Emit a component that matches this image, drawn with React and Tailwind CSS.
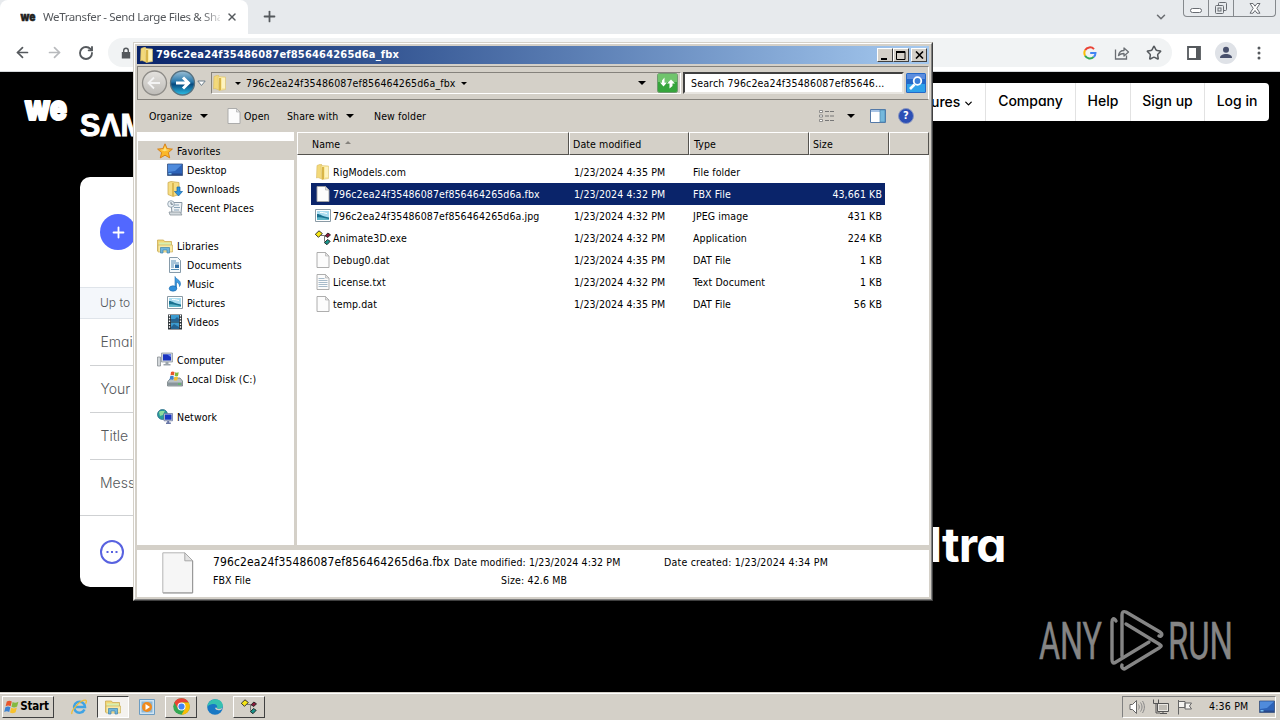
import { ArrowLeft, ArrowRight, RotateCw, X, Plus, ChevronDown, Star } from 'lucide-react';

const UI = "font-['DejaVu_Sans_Condensed','DejaVu_Sans',sans-serif] [font-stretch:condensed]";

function Icon({ size = 16, box = 16, className = '', children }) {
  return (
    <svg width={size} height={size} viewBox={`0 0 ${box} ${box}`} className={`block shrink-0 ${className}`}>
      {children}
    </svg>
  );
}

function FolderIcon() {
  return (
    <Icon>
      <path d="M2 1.500 6 0l1 1v14l-4-1.500-1.500.5z" fill="#f3d97a" stroke="#d8bb62" strokeWidth=".6" />
      <path d="M6 1.500 13.500 2v12.500L7 15.500z" fill="#fbe99c" stroke="#dcc273" strokeWidth=".6" />
      <path d="M7 3h2v12l-2 .5z" fill="#d8b548" />
      <path d="M10 3h3v10h-3z" fill="#fdf3c0" />
    </Icon>
  );
}

function FileIcon({ lines, size = 16 }) {
  return (
    <Icon size={size}>
      <path d="M2 .5h8.500l3.500 3.500v11.500H2z" fill="#fcfcfc" stroke="#a5a5a5" strokeWidth=".9" />
      <path d="M10.500.5v3.500H14z" fill="#e4e4e4" stroke="#a5a5a5" strokeWidth=".6" />
      {lines && <path d="M3.500 4.500h6M3.500 6.500h9M3.500 8.500h9M3.500 10.500h9M3.500 12.500h9" stroke="#9db3c4" strokeWidth=".9" />}
    </Icon>
  );
}

function PictureIcon() {
  return (
    <Icon>
      <path d="M.5 1.500h15v12H.5z" fill="#fff" stroke="#8a9aa5" />
      <path d="M2 3h12v9H2z" fill="#a9dcf0" />
      <path d="M2 6c4 0 5 2.500 12 3.500V12H2z" fill="#17708f" />
      <path d="M2 9.500c4-1 8 1 12 1.500v1H2z" fill="#5fb6c9" />
      <path d="M5 4.500c3-.5 4 .5 7 1" stroke="#fff" fill="none" />
    </Icon>
  );
}

function AppIcon({ size = 16 }) {
  return (
    <Icon size={size}>
      <path d="M6 5.500h3.500v6H11M9.500 6H11" stroke="#777" fill="none" />
      <path d="M4 .8 7.300 3.500 3.500 7.300.3 4.300z" fill="#f5e614" stroke="#222" strokeWidth=".9" />
      <path d="m12.800 3 2.700 1.800-2.700 2.700-2.600-1.700z" fill="#8c1a3c" stroke="#222" strokeWidth=".9" />
      <path d="m12.500 9.500 2.700 1.800-3.200 3.400-2.600-2z" fill="#18958c" stroke="#222" strokeWidth=".9" />
    </Icon>
  );
}

function StarIcon() {
  return (
    <Icon>
      <path d="m8 .8 2.100 4.800 5.300.5-4 3.500 1.300 5.300L8 12.200l-4.700 2.700 1.300-5.300-4-3.500 5.300-.5z" fill="#fbb829" stroke="#d67c12" strokeWidth=".9" />
      <path d="m8 3 1.300 3.400 3.200.3-5 1.500-4-1.500 3.200-.3z" fill="#ffe07a" />
    </Icon>
  );
}

function DesktopIcon() {
  return (
    <Icon>
      <path d="M.5 2h15v11.500H.5z" fill="#2d63b8" stroke="#38527c" strokeWidth=".8" />
      <path d="M1 2.500h14L8 9 1 10z" fill="#4f8bdc" />
      <path d="M1 11.500h14V13H1z" fill="#28488a" />
      <path d="M1.500 11h3v1.500h-3z" fill="#79c0ef" />
    </Icon>
  );
}

function DownloadsIcon() {
  return (
    <Icon>
      <path d="M1 1.500 4 .5l8 1v12l-6 2-5-2z" fill="#f6dd84" stroke="#c9a545" strokeWidth=".7" />
      <path d="M5 2h2v13H5z" fill="#dcb951" />
      <path d="M10 6h3v4.500h2.500l-4 4.500-4-4.500H10z" fill="#2f93dd" stroke="#1666a8" strokeWidth=".7" />
    </Icon>
  );
}

function RecentIcon() {
  return (
    <Icon>
      <path d="M4 2.500h11l-1 11h-9z" fill="#eef2f5" stroke="#8897a4" />
      <path d="M7 5h5M7 7.500h6M7 10h5" stroke="#8aa4b8" />
      <circle cx="4" cy="4" r="3.300" fill="#e9f0f5" stroke="#8596a3" strokeWidth=".8" />
      <path d="M4 2v2.200h2" stroke="#526270" fill="none" strokeWidth=".8" />
      <path d="M2 12h11l2 3H3z" fill="#d4dade" stroke="#808b93" strokeWidth=".7" />
    </Icon>
  );
}

function LibrariesIcon({ size = 16 }) {
  return (
    <Icon size={size}>
      <path d="M.5 2h6l1 1.500h7V13H.5z" fill="#f2d778" stroke="#c5a446" strokeWidth=".7" />
      <path d="M2 4.500h12V8H2z" fill="#d8eeb0" />
      <path d="M1 7h14.500v7H1z" fill="#f9e9a4" stroke="#cdb159" strokeWidth=".7" />
      <path d="M3.500 15V9.500h9V15h-2.500v-3H6v3z" fill="#6fb5dc" stroke="#3c83ac" strokeWidth=".7" />
    </Icon>
  );
}

function DocumentsIcon() {
  return (
    <Icon>
      <path d="M2.500.5h8l3 3v12h-11z" fill="#f6fafc" stroke="#7890a0" strokeWidth=".9" />
      <path d="M4 4h5M4 6h8M4 8h3M4 10h3M4 12.500h8" stroke="#568eb6" />
      <path d="M8 7.500h4V11H8z" fill="#2e6da4" />
    </Icon>
  );
}

function MusicIcon() {
  return (
    <Icon>
      <path d="M8 .5c1 3 5.500 3 5.500 7.500 0 1-.5 2-1 2.500C12.500 7 10 6.500 9.500 6v6.500H8z" fill="#3e9be0" stroke="#1e70b5" strokeWidth=".6" />
      <ellipse cx="6" cy="12.500" rx="3.800" ry="2.700" fill="#2f8fdb" stroke="#1b68aa" strokeWidth=".6" />
    </Icon>
  );
}

function VideosIcon() {
  return (
    <Icon>
      <path d="M1 .5h14v15H1z" fill="#2c3338" />
      <path d="M4 1h8v6.500H4zM4 8.500h8V15H4z" fill="#3b9bd0" />
      <path d="M4 5h4l2-2 2 2v2.500H4zM4 13l3-3 5 3v2H4z" fill="#246391" />
      <path d="M2.500 1v14M13.500 1v14" stroke="#fff" strokeWidth="1.300" strokeDasharray="1.500 1.300" />
    </Icon>
  );
}

function ComputerIcon() {
  return (
    <Icon>
      <path d="M.5 5h3v9h-3z" fill="#d3d7da" stroke="#7e858a" strokeWidth=".7" />
      <path d="M4.500 1h11v9h-11z" fill="#cfd5dc" stroke="#858f98" strokeWidth=".7" />
      <path d="M6 2.300h8v6.200H6z" fill="#1a35c0" />
      <path d="M10 2.300h4v3z" fill="#6e8cf0" />
      <path d="M8.500 10h3v2h2v1.500h-7V12h2z" fill="#9ba4ab" />
    </Icon>
  );
}

function DiskIcon() {
  return (
    <Icon>
      <path d="m2 9 2-2h9l2.500 3v5H.5v-4z" fill="#b9c2c6" stroke="#737d82" strokeWidth=".8" />
      <path d="M1 11.500h14v3H1z" fill="#89959b" />
      <path d="M11 12.500h3v1h-3z" fill="#45d445" />
      <path d="M4 1c1.500-1 2.500-.5 3.500 0L7 4.500c-1.200-.6-2.300-.6-3.500 0z" fill="#e8562a" />
      <path d="M8.200 1.300c1 .5 2 .5 3.500 0L11 5c-1.200.5-2.200.5-3.300 0z" fill="#82b93c" />
      <path d="M3.200 5.300c1.200-.6 2.300-.6 3.500 0L6 9c-1.200-.6-2.200-.6-3.500 0z" fill="#3d83d2" />
      <path d="M7.500 5.700c1 .5 2 .5 3.500 0l-.8 3.500c-1 .5-2.200.5-3.300 0z" fill="#f6c12e" />
    </Icon>
  );
}

function NetworkIcon() {
  return (
    <Icon>
      <circle cx="5.500" cy="5.500" r="5" fill="#2b9c9c" stroke="#1b5f80" strokeWidth=".7" />
      <path d="M2 3c2-2 4 0 6-1.500L6 6 3 7z" fill="#8fdc9c" />
      <path d="M7 4.500h8.500v7.300H7z" fill="#cfd5dc" stroke="#5d6b9a" strokeWidth=".7" />
      <path d="M8 5.500h6.500v5.200H8z" fill="#1936c4" />
      <path d="M10.200 12h2v1.500h1.600V15H9v-1.500h1.200z" fill="#6775a5" />
    </Icon>
  );
}

function WindowsFlag({ size = 16 }) {
  return (
    <Icon size={size}>
      <path d="M2.800 2.500c2-1.200 3.500-.9 5 0L6.600 7.300c-1.500-.9-3-1.100-5 0z" fill="#e7562b" />
      <path d="M8.600 3c1.800 1 3.500.9 5.800-.3l-1.300 4.800c-2 1.100-3.800 1.200-5.600.2z" fill="#84b940" />
      <path d="M1.400 8.300c2-1.100 3.500-.9 5 0l-1.200 4.800c-1.500-.9-3-1.100-5 0z" fill="#3c82d2" />
      <path d="M7.200 8.700c1.800 1 3.600.9 5.700-.2l-1.300 4.800c-2 1.100-3.800 1.200-5.600.2z" fill="#f7c12d" />
    </Icon>
  );
}

function Caret() {
  return <span className="block h-0 w-0 shrink-0 border-x-4 border-t-4 border-x-transparent border-t-black" />;
}

function SmallCaret() {
  return <span className="block h-0 w-0 shrink-0 border-x-[3px] border-t-[3px] border-x-transparent border-t-black" />;
}

function BrowserChrome() {
  return (
    <div className="h-[72px] border-b border-[#d5d8db] bg-white">
      <div className="flex h-[34px] bg-[#e7eaed]">
        <div className="flex h-full w-[248px] items-center rounded-t-lg bg-white pl-5">
          <svg width="16" height="18" viewBox="0 0 16 18" className="shrink-0">
            <text x=".5" y="12.500" fontFamily="Inter" fontWeight="900" fontSize="12" textLength="15" lengthAdjust="spacingAndGlyphs" stroke="#222" strokeWidth=".5" fill="#222">we</text>
          </svg>
          <span className="ml-[7px] w-[177px] font-['Noto_Sans',sans-serif] text-[11.500px] tracking-[-0.380px] whitespace-nowrap text-[#55585c] [mask-image:linear-gradient(to_right,black_90%,rgba(0,0,0,0.2))]">
            WeTransfer - Send Large Files &amp; Sha
          </span>
          <X size={12} strokeWidth={2.800} className="ml-[6px] text-[#55595d]" />
        </div>
        <Plus size={17} strokeWidth={2.500} className="mt-2 ml-[13px] text-[#55595d]" />
        <div className="ml-auto flex">
          <ChevronDown size={14} strokeWidth={2.600} className="mt-[10px] mr-[15px] text-[#6b6e72]" />
          <div className="mr-[4px] flex h-[17px] w-[93px] rounded-b border border-t-0 border-[#85898d]">
            <div className="flex w-[25px] items-end justify-center border-r border-[#85898d] pb-[3px]">
              <span className="h-[5px] w-3 rounded-sm border border-[#686c72] bg-white" />
            </div>
            <div className="flex w-[25px] items-center justify-center border-r border-[#85898d]">
              <svg width="14" height="14" viewBox="0 0 14 14" fill="none" stroke="#686c72">
                <rect x="4.500" y="1.500" width="8" height="8" rx="1" />
                <rect x="1.500" y="4.500" width="8" height="8" rx="1" fill="#e7eaed" />
                <rect x="4" y="7" width="3" height="3" />
              </svg>
            </div>
            <div className="flex flex-1 items-center justify-center">
              <svg width="12" height="11" viewBox="0 0 12 11" fill="#fff" stroke="#686c72" strokeWidth="1">
                <path d="M1 .5h3L6 3.200 8 .5h3L7.800 5.300 11 10.200H8L6 7.500 4 10.200H1l3.200-4.900z" />
              </svg>
            </div>
          </div>
        </div>
      </div>
      <div className="flex h-[37px] items-center pl-[14px] text-[#55595d]">
        <ArrowLeft size={17} strokeWidth={2.400} />
        <ArrowRight size={17} strokeWidth={2.400} className="ml-[15px] text-[#b8babd]" />
        <RotateCw size={16} strokeWidth={2.800} className="ml-[15px]" />
        <div className="ml-[14px] flex h-[29px] w-[1064px] items-center rounded-full bg-[#f1f3f4] pl-3">
          <svg width="10" height="12" viewBox="0 0 10 12" className="ml-[1px]">
            <path d="M.8 5h8.400v6.500H.8z" fill="#55595d" />
            <path d="M2.700 5V3.500a2.300 2.300 0 0 1 4.600 0V5" fill="none" stroke="#55595d" strokeWidth="1.400" />
          </svg>
          <div className="mr-[10px] ml-auto flex items-center">
            <svg width="14" height="14" viewBox="0 0 14 14" fill="none" strokeWidth="2">
              <path d="M2.100 4.300A5.500 5.500 0 0 1 11 3.100" stroke="#ea4335" />
              <path d="M2.100 4.300a5.500 5.500 0 0 0 0 5.400" stroke="#fbbc05" />
              <path d="M2.100 9.700a5.500 5.500 0 0 0 8.500 1.300" stroke="#34a853" />
              <path d="M7.200 7h5.300c0 1.600-.6 3-1.900 4" stroke="#4285f4" />
            </svg>
            <svg width="16" height="16" viewBox="0 0 16 16" fill="none" stroke="#6a6e73" strokeWidth="1.300" className="ml-[17px]">
              <path d="M1.500 4.500V14h11v-3.500" />
              <path d="M4.500 10.500C5 7 7 5.500 10 5.500V3l4.500 4-4.500 4V8.500c-2.500 0-4 .5-5.500 2z" strokeLinejoin="round" />
            </svg>
            <Star size={16} strokeWidth={2.300} className="ml-4" />
          </div>
        </div>
        <svg width="14" height="14" viewBox="0 0 14 14" className="ml-[15px]">
          <path d="M1 1h12v12H1z" fill="none" stroke="#55595d" strokeWidth="1.800" />
          <path d="M9 1h4v12H9z" fill="#55595d" />
        </svg>
        <svg width="22" height="22" viewBox="0 0 22 22" className="ml-[14px]">
          <circle cx="11" cy="11" r="11" fill="#dfe2e7" />
          <circle cx="11" cy="7.700" r="3" fill="#474f6b" />
          <path d="M5 16c0-3 3-4 6-4s6 1 6 4z" fill="#474f6b" />
        </svg>
        <svg width="4" height="14" viewBox="0 0 4 14" className="ml-[20px]" fill="#55595d">
          <circle cx="2" cy="2" r="1.500" />
          <circle cx="2" cy="7" r="1.500" />
          <circle cx="2" cy="12" r="1.500" />
        </svg>
      </div>
    </div>
  );
}

const FIELDS = ['Emai', 'Your', 'Title'];

function WebPage() {
  return (
    <div className="relative h-[620px] overflow-hidden bg-black">
      <div className="flex justify-between">
        <svg width="150" height="80" viewBox="0 0 150 80" className="block">
          <g fill="#fff" fontFamily="Inter">
            <text x="25" y="48" fontSize="34" fontWeight="900" textLength="42" lengthAdjust="spacingAndGlyphs" stroke="#fff" strokeWidth="2" strokeLinejoin="round">we</text>
            <text x="80" y="63.500" fontSize="31" fontWeight="800" textLength="66" lengthAdjust="spacingAndGlyphs" fontFamily="Liberation Sans" stroke="#fff" strokeWidth="1">SΛM</text>
          </g>
        </svg>
        <div className="mt-[11px] mr-[11px] flex h-[38px] rounded-r bg-white font-[Inter,sans-serif] text-[14px] leading-[36px] text-black [font-feature-settings:'cv11'] [font-weight:450]">
          <div className="flex w-[54px] items-center border-r border-[#e2e2e2]">
            <span className="-ml-px">ures</span>
            <ChevronDown size={11} strokeWidth={2.800} className="mt-[2px] ml-[3px]" />
          </div>
          <div className="w-[90px] border-r border-[#e2e2e2] text-center">Company</div>
          <div className="w-[55px] border-r border-[#e2e2e2] text-center">Help</div>
          <div className="w-[74px] border-r border-[#e2e2e2] text-center">Sign up</div>
          <div className="w-[64px] text-center">Log in</div>
        </div>
      </div>

      <div className="absolute top-[105px] left-20 h-[410px] w-[70px] overflow-hidden rounded-l-[10px] bg-white font-[Inter,sans-serif] text-[14px] font-light text-[#55585b] [font-feature-settings:'cv11']">
        <div className="flex h-[110px] items-center pl-5">
          <div className="flex h-9 w-9 shrink-0 items-center justify-center rounded-full bg-[#5268ff] text-white">
            <Plus size={17} strokeWidth={2.600} />
          </div>
        </div>
        <div className="h-8 border-y border-[#dfe4ea] bg-[#f4f7fb] pl-5 text-[12px] leading-[30px]">Up to</div>
        {FIELDS.map((label) => (
          <div key={label} className="ml-[10px] h-[47px] border-b border-[#cfd1d3] pl-[10.500px] leading-[46px] whitespace-nowrap">{label}</div>
        ))}
        <div className="h-[56px] border-b border-[#cfd1d3] pl-5 leading-[46px] whitespace-nowrap">Mess</div>
        <svg width="24" height="24" viewBox="0 0 24 24" className="mt-6 ml-5 block">
          <circle cx="12" cy="12" r="11" fill="none" stroke="#5862e0" strokeWidth="2" />
          <path d="M6.500 11h2v2h-2zM11 11h2v2h-2zM15.500 11h2v2h-2z" fill="#5862e0" />
        </svg>
      </div>

      <div className="absolute top-[445px] left-[929px] font-[Inter,sans-serif] text-[48px] leading-[56px] font-bold tracking-[-0.800px] text-white [font-feature-settings:'cv11']">ltra</div>

      <svg width="210" height="80" viewBox="0 0 210 80" className="absolute top-[533px] left-[1034px]">
        <g fill="#858585" fontFamily="Roboto" fontSize="51.500">
          <text x="5" y="53.500" textLength="63" lengthAdjust="spacingAndGlyphs" stroke="#858585" strokeWidth=".5">ANY</text>
          <text x="134" y="53.500" textLength="65" lengthAdjust="spacingAndGlyphs" stroke="#858585" strokeWidth=".5">RUN</text>
        </g>
        <g fill="none" stroke="#858585" strokeWidth="3.400" strokeLinejoin="round" strokeLinecap="round">
          <path d="M82 16c-2-4-4-2-4 1v37c0 4 1 5 4 3l33-20" />
          <path d="M88 51V10c0-3 1-4 4-3l34 20c3 2 2 5-1 4" />
          <path d="M92 19l33 20c3 2 3 2 0 4L92 63c-2 2-5 0-4-3" />
        </g>
      </svg>
    </div>
  );
}

function WinButton({ children, className = '' }) {
  return (
    <div className={`flex items-center justify-center border border-t-white border-r-[#404040] border-b-[#404040] border-l-white bg-[#d4d0c8] ${className}`}>
      {children}
    </div>
  );
}

function TitleBar() {
  return (
    <div className="flex h-[18px] shrink-0 items-center bg-linear-to-r from-[#0a246a] to-[#a6caf0] pr-[2px] pl-[2px]">
      <FolderIcon />
      <span className="ml-px text-[11px] font-bold tracking-[0.190px] whitespace-nowrap text-white">796c2ea24f35486087ef856464265d6a_fbx</span>
      <WinButton className="ml-auto h-[14px] w-4">
        <svg width="10" height="9"><path d="M1 8h6" stroke="#000" strokeWidth="2" /></svg>
      </WinButton>
      <WinButton className="h-[14px] w-4">
        <svg width="10" height="9"><path d="M.5 1h8.500M.5.5v8h8.500v-8" fill="none" stroke="#000" /><path d="M0 1h9" stroke="#000" strokeWidth="2" /></svg>
      </WinButton>
      <WinButton className="ml-[2px] h-[14px] w-4">
        <svg width="9" height="8"><path d="M1 0.500l7 7M8 .5l-7 7" stroke="#000" strokeWidth="1.600" /></svg>
      </WinButton>
    </div>
  );
}

function AddressBar() {
  return (
    <div className="mt-[2px] flex h-[34px] shrink-0 items-center border border-t-[#85827c] border-r-white border-b-[#85827c] border-l-[#85827c] pl-[3px]">
      <svg width="56" height="28" viewBox="0 0 56 28" className="shrink-0">
        <defs>
          <linearGradient id="fwd" x2="0" y2="1">
            <stop offset="0" stopColor="#9dc0d6" />
            <stop offset=".45" stopColor="#2778ab" />
            <stop offset=".55" stopColor="#07497e" />
            <stop offset="1" stopColor="#2cc0e8" />
          </linearGradient>
          <linearGradient id="back" x2="0" y2="1">
            <stop offset="0" stopColor="#e4e2de" />
            <stop offset="1" stopColor="#bdbbb7" />
          </linearGradient>
        </defs>
        <circle cx="13.500" cy="14" r="12" fill="url(#back)" stroke="#8e8c88" strokeWidth="1.300" />
        <path d="M8 14h11M13 8.500 7.500 14l5.500 5.500" fill="none" stroke="#f3f3f3" strokeWidth="1.800" />
        <circle cx="41.500" cy="14" r="12" fill="url(#fwd)" stroke="#57717f" strokeWidth="1.300" />
        <path d="M35 14h12M42 8.500l5.500 5.500-5.500 5.500" fill="none" stroke="#fff" strokeWidth="3" />
      </svg>
      <svg width="9" height="7" viewBox="0 0 9 7" className="mr-[5px] shrink-0"><path d="M.8 1h7.400L4.500 5.500z" fill="#fff" stroke="#6c7f8c" /></svg>
      <div className="flex h-[22px] w-[470px] shrink-0 items-center border border-t-[#85827c] border-r-white border-b-white border-l-[#85827c]">
        <FolderIcon />
        <span className="ml-[7px]"><SmallCaret /></span>
        <span className="ml-[5px] w-[210px] tracking-[0.130px] whitespace-nowrap">796c2ea24f35486087ef856464265d6a_fbx</span>
        <span className="ml-[5px]"><SmallCaret /></span>
        <span className="mr-[11px] ml-auto"><Caret /></span>
        <svg width="21" height="20" viewBox="0 0 21 20" className="mr-[2px]">
          <rect x=".5" y=".5" width="20" height="19" rx="2" fill="#36a53c" stroke="#6f9a70" />
          <path d="M1 1h19v8H1z" fill="#6fc46c" />
          <path d="M6.500 13.500 3 9.500h2V7.500L7.500 4.500v5H10z" fill="#fff" />
          <path d="M14 6.500l4 4h-2.500v2.500l-3 2.500v-5H10z" fill="#fff" />
        </svg>
      </div>
      <div className="ml-[2px] flex h-[22px] w-[221px] shrink-0 items-center border-2 border-t-[#404040] border-r-[#e8e6e1] border-b-[#e8e6e1] border-l-[#404040] bg-white pl-[6px] tracking-[0.160px] whitespace-nowrap">
        Search 796c2ea24f35486087ef85646...
      </div>
      <svg width="20" height="20" viewBox="0 0 20 20" className="ml-[2px] shrink-0">
        <rect width="20" height="20" rx="1.500" fill="#2468c8" />
        <path d="M1 11h18v8H1z" fill="#2fa2ea" />
        <path d="M1 1h18v5H1z" fill="#5c8dde" />
        <circle cx="11.500" cy="8" r="3.800" fill="#3b7fd8" stroke="#fff" strokeWidth="1.800" />
        <path d="m8.500 11.500-4.500 4.500" stroke="#fff" strokeWidth="2.600" />
      </svg>
    </div>
  );
}

function CommandBar() {
  return (
    <div className="flex h-[32px] shrink-0 items-center pr-[15px] pl-3 whitespace-nowrap">
      <span className="w-[51px]">Organize</span>
      <Caret />
      <span className="ml-[18px]"><FileIcon /></span>
      <span className="ml-[2px] w-[43px]">Open</span>
      <span className="w-[59px]">Share with</span>
      <Caret />
      <span className="ml-5">New folder</span>
      <svg width="16" height="14" viewBox="0 0 16 14" className="mr-[12px] ml-auto">
        <path d="M.5 1.500h3v2h-3zM.5 6h3v2h-3zM.5 10.500h3v2h-3z" fill="#fff" stroke="#777" strokeWidth=".8" />
        <path d="M6 2.500h10M6 7h10M6 11.500h10" stroke="#777" strokeDasharray="4 1" />
      </svg>
      <Caret />
      <svg width="16" height="14" viewBox="0 0 16 14" className="ml-[15px]">
        <path d="M.5.5h15v13H.5z" fill="#fff" stroke="#5479a8" />
        <path d="M1 1h9v2H1z" fill="#a9c4e4" />
        <path d="M10 1h5v12h-5z" fill="#75b8dc" stroke="#4a88b0" strokeWidth=".7" />
      </svg>
      <span className="ml-3 flex h-4 w-4 items-center justify-center rounded-full border border-[#8a97c0] bg-[#2c4fb5] text-[11px] font-bold text-white">?</span>
    </div>
  );
}

const NAV = [
  { label: 'Favorites', icon: StarIcon, active: true },
  { label: 'Desktop', icon: DesktopIcon, child: true },
  { label: 'Downloads', icon: DownloadsIcon, child: true },
  { label: 'Recent Places', icon: RecentIcon, child: true },
  null,
  { label: 'Libraries', icon: LibrariesIcon },
  { label: 'Documents', icon: DocumentsIcon, child: true },
  { label: 'Music', icon: MusicIcon, child: true },
  { label: 'Pictures', icon: PictureIcon, child: true },
  { label: 'Videos', icon: VideosIcon, child: true },
  null,
  { label: 'Computer', icon: ComputerIcon },
  { label: 'Local Disk (C:)', icon: DiskIcon, child: true },
  null,
  { label: 'Network', icon: NetworkIcon },
];

function NavPane() {
  return (
    <div className="w-[157px] shrink-0 bg-white pt-[9px]">
      {NAV.map((item, i) => {
        if (!item) return <div key={i} className="h-[19px]" />;
        const Glyph = item.icon;
        return (
          <div key={i} className={`ml-px flex h-[19px] items-center gap-1 ${item.child ? 'pl-[29px]' : 'pl-[19px]'} ${item.active ? 'bg-[#d4d0c8]' : ''}`}>
            <Glyph />
            <span className="pt-px">{item.label}</span>
          </div>
        );
      })}
    </div>
  );
}

const FILES = [
  { name: 'RigModels.com', date: '1/23/2024 4:35 PM', type: 'File folder', size: '', icon: <FolderIcon /> },
  { name: '796c2ea24f35486087ef856464265d6a.fbx', date: '1/23/2024 4:32 PM', type: 'FBX File', size: '43,661 KB', icon: <FileIcon />, selected: true },
  { name: '796c2ea24f35486087ef856464265d6a.jpg', date: '1/23/2024 4:32 PM', type: 'JPEG image', size: '431 KB', icon: <PictureIcon /> },
  { name: 'Animate3D.exe', date: '1/23/2024 4:32 PM', type: 'Application', size: '224 KB', icon: <AppIcon /> },
  { name: 'Debug0.dat', date: '1/23/2024 4:35 PM', type: 'DAT File', size: '1 KB', icon: <FileIcon /> },
  { name: 'License.txt', date: '1/23/2024 4:32 PM', type: 'Text Document', size: '1 KB', icon: <FileIcon lines /> },
  { name: 'temp.dat', date: '1/23/2024 4:35 PM', type: 'DAT File', size: '56 KB', icon: <FileIcon /> },
];

const HEAD = 'flex items-center border border-t-white border-l-white border-r-[#55534f] border-b-[#55534f] bg-[#d4d0c8] pt-px';

function FileList() {
  return (
    <div className="min-w-0 flex-1 bg-white">
      <div className="flex h-[23px]">
        <div className={`${HEAD} w-[272px] pl-[14px]`}>
          Name
          <span className="mb-1 ml-[5px] h-0 w-0 border-x-[3px] border-b-[3px] border-x-transparent border-b-[#85827c]" />
        </div>
        <div className={`${HEAD} w-[120px] pl-[3px]`}>Date modified</div>
        <div className={`${HEAD} w-[120px] pl-1`}>Type</div>
        <div className={`${HEAD} w-20 pl-[3px]`}>Size</div>
        <div className={`${HEAD} flex-1`} />
      </div>
      <div className="mt-[6px] ml-[14px] w-[574px]">
        {FILES.map((f) => (
          <div key={f.name} className={`flex h-[22px] items-center whitespace-nowrap ${f.selected ? 'bg-[#0a246a] text-white' : ''}`}>
            <span className="ml-1 w-[18px]">{f.icon}</span>
            <span className="w-[241px]">{f.name}</span>
            <span className="w-[119px]">{f.date}</span>
            <span className="w-[110px]">{f.type}</span>
            <span className="flex-1 pr-[3px] text-right">{f.size}</span>
          </div>
        ))}
      </div>
    </div>
  );
}

function DetailsPane() {
  return (
    <div className="flex flex-1 bg-white pt-[2px] whitespace-nowrap">
      <svg width="32" height="42" viewBox="0 0 32 42" className="ml-[25px]">
        <path d="M.8.8h22l8 8v32H.8z" fill="#f6f6f6" stroke="#b4b4b4" />
        <path d="M22.800.8v8h8z" fill="#e2e2e2" stroke="#a8a8a8" />
        <path d="M30.500 9v32H1" fill="none" stroke="#999" />
      </svg>
      <div className="mt-px ml-[19px] leading-[18px]">
        <div className="flex">
          <span className="w-[241px] text-[12px] tracking-[0.130px]">796c2ea24f35486087ef856464265d6a.fbx</span>
          <span className="w-[210px] tracking-[0.120px]">Date modified: 1/23/2024 4:32 PM</span>
          <span className="tracking-[0.220px]">Date created: 1/23/2024 4:34 PM</span>
        </div>
        <div className="flex">
          <span className="w-[288px]">FBX File</span>
          <span className="tracking-[0.150px]">Size: 42.6 MB</span>
        </div>
      </div>
    </div>
  );
}

function ExplorerWindow() {
  return (
    <div className={`absolute top-[42px] left-[133px] h-[559px] w-[800px] border border-t-[#d4d0c8] border-r-[#404040] border-b-[#404040] border-l-[#d4d0c8] bg-[#d4d0c8] ${UI} text-[10.500px] leading-4 tracking-[0.100px] text-black`}>
      <div className="flex h-full flex-col border border-t-white border-r-[#808080] border-b-[#808080] border-l-white p-[2px]">
        <TitleBar />
        <AddressBar />
        <CommandBar />
        <div className="flex h-[413px] shrink-0">
          <NavPane />
          <div className="w-[3px] bg-[#d4d0c8]" />
          <FileList />
        </div>
        <div className="h-[5px] shrink-0 bg-[#d4d0c8]" />
        <DetailsPane />
      </div>
    </div>
  );
}

function ChromeLogo() {
  return (
    <Icon size={17}>
      <circle cx="8" cy="8" r="7.800" fill="#34a853" />
      <path d="M1.200 4.200A7.800 7.800 0 0 1 14.800 4.200H8L4.700 10z" fill="#ea4335" />
      <path d="M14.800 4.200A7.800 7.800 0 0 1 8 15.800L11.300 10 8 4.200z" fill="#fbbc05" />
      <circle cx="8" cy="8" r="3.800" fill="#fff" />
      <circle cx="8" cy="8" r="2.900" fill="#4285f4" />
    </Icon>
  );
}

function Taskbar() {
  return (
    <div className={`flex h-7 items-center border-t border-[#d4d0c8] bg-[#d4d0c8] pt-px pb-px shadow-[inset_0_1px_0_#fff] ${UI} text-[10.500px] text-black`}>
      <WinButton className="ml-[2px] h-[22px] w-[52px] gap-0 pr-[3px] text-[11.500px] font-bold tracking-[-0.200px]">
        <WindowsFlag size={16} />
        Start
      </WinButton>
      <Icon className="ml-[17px]">
        <path d="M13.500 10.500A5.500 5.500 0 1 1 14 8H4.500" fill="none" stroke="#3fa3e4" strokeWidth="2.500" />
        <path d="M1 15C-.5 12 9 1 14.500 1.200c1.500.3.8 2.300 0 3.500" fill="none" stroke="#f0bd35" strokeWidth="1.300" />
      </Icon>
      <div className="ml-[10px] flex h-[22px] w-8 items-center justify-center border border-t-[#404040] border-r-white border-b-white border-l-[#404040] bg-[#f4f2ee]">
        <LibrariesIcon />
      </div>
      <Icon className="ml-[10px]">
        <path d="M.5.5h15v15H.5z" fill="#cfe3f2" stroke="#6b9cc2" />
        <path d="M2.500 2.500h11v11h-11z" fill="#8ab6d6" />
        <circle cx="8" cy="8" r="5" fill="#f08a1d" />
        <path d="M6.500 5v6l4.500-3z" fill="#fff" />
      </Icon>
      <WinButton className="ml-[10px] h-[22px] w-8"><ChromeLogo /></WinButton>
      <Icon className="ml-[10px]">
        <circle cx="8" cy="8" r="7.800" fill="#1878c4" />
        <path d="M.3 8C1 2 5 .2 8.500.2c5 0 7.300 3.800 7.300 6.300 0 2-1.500 3.500-4 3.500-1.500 0-2.300-.5-1.800-1.200C11 6 8 4.500 5.500 5 3 5.300 1 6.500.3 8z" fill="#35c1b0" />
        <path d="M10 8.800c-.5.7.3 1.200 1.800 1.200 1.200 0 2-.3 2.700-.8.500 0 .8.300.3 1.100-1 .9-6 2.200-6.800-1.500z" fill="#d4d0c8" />
      </Icon>
      <WinButton className="ml-[10px] h-[22px] w-8"><AppIcon /></WinButton>
      <div className="mr-1 ml-auto flex h-[22px] w-[154px] items-center border border-t-[#808080] border-r-white border-b-white border-l-[#808080] pl-[6px]">
        <Icon>
          <path d="M1 5.500h2.500l4-4v13l-4-4H1z" fill="#fff" stroke="#666" />
          <path d="M9.500 5.500c1 1.500 1 3.500 0 5M11.500 3.500c2 3 2 6 0 9M13.500 2c2.500 4 2.500 8 0 12" fill="none" stroke="#888" />
        </Icon>
        <Icon className="ml-2">
          <path d="M4.500 4.500h11v8h-11z" fill="#e9e7e2" stroke="#555" />
          <path d="M6 6h8v5H6z" fill="#bfbcb5" />
          <path d="M7 14.500h7M10 12.500v2M.5.500v4h5v-4M3 4.500V14h4" fill="none" stroke="#555" />
        </Icon>
        <Icon className="ml-2">
          <path d="M1.500 1v14.500M2 2.500h6v6H2M8 4h6.500l-2 3 2 3H8z" fill="#f5f4f1" stroke="#666" />
        </Icon>
        <span className="ml-4 w-[51px] pt-px tracking-[0.200px] whitespace-nowrap">4:36 PM</span>
        <DesktopIcon />
      </div>
    </div>
  );
}

export default function App() {
  return (
    <div className="relative h-[720px] w-[1280px] overflow-hidden bg-black">
      <BrowserChrome />
      <WebPage />
      <Taskbar />
      <ExplorerWindow />
    </div>
  );
}
